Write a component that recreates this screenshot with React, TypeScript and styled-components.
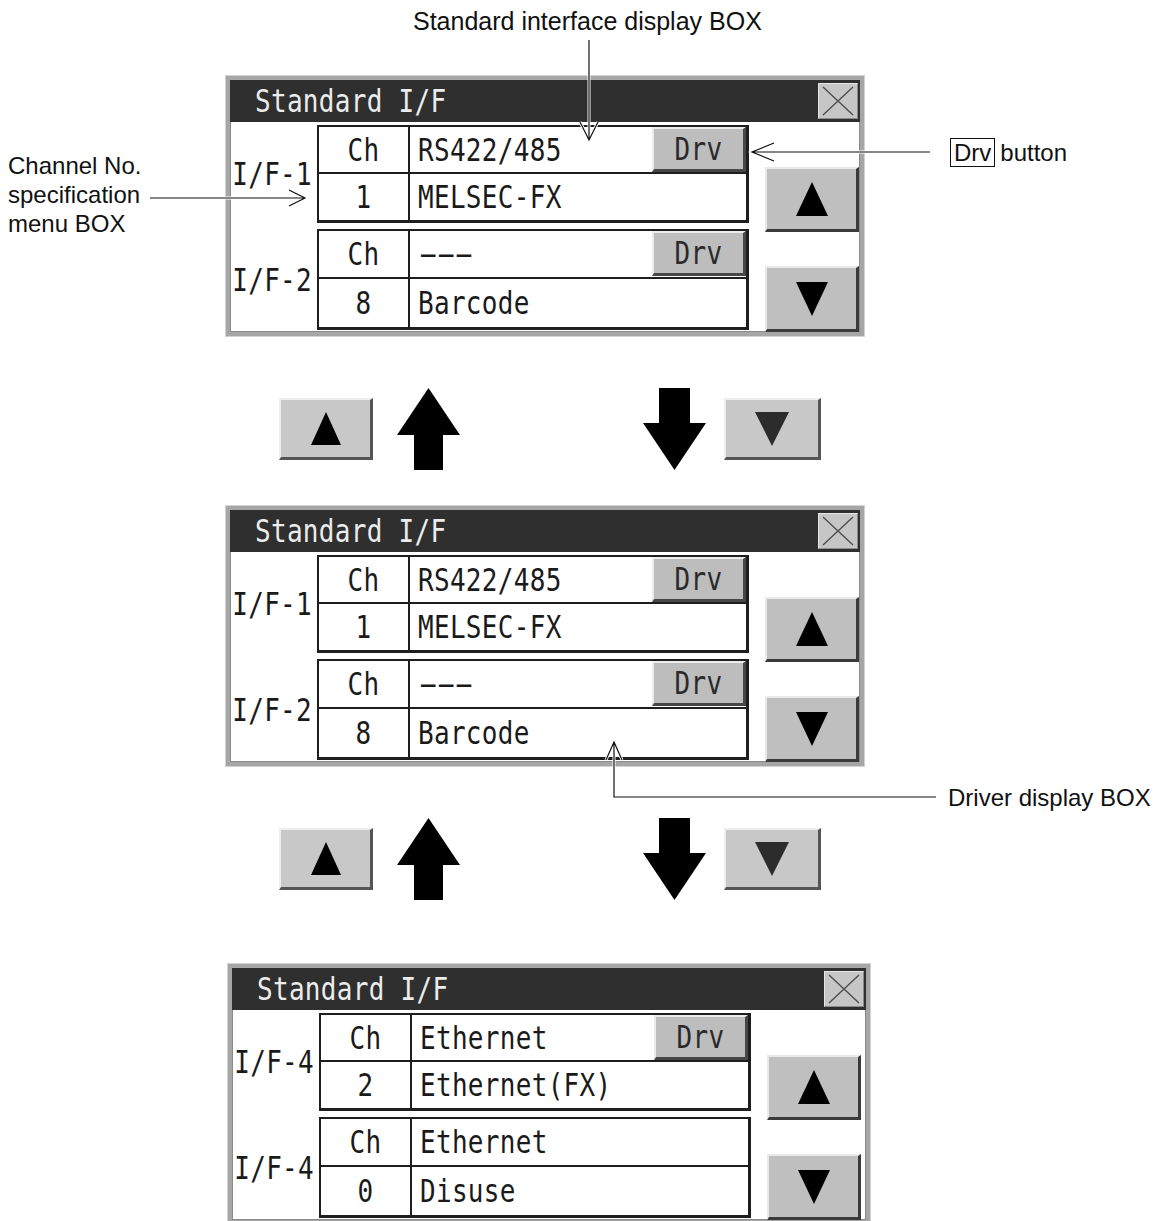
import React from 'react';
import styled, { createGlobalStyle } from 'styled-components';

const GlobalStyle = createGlobalStyle`
  html, body {
    margin: 0;
    padding: 0;
    background: #fff;
  }
  body {
    font-family: 'Liberation Sans', Arial, sans-serif;
    color: #111;
  }
`;

const Page = styled.div`
  position: relative;
  width: 1153px;
  height: 1221px;
  overflow: hidden;
  background: #fff;
  display: flex;
  flex-direction: column;
  padding-top: 76px;
  box-sizing: border-box;
`;

// ---------- HMI screen ----------

const Lcd = styled.span`
  font-family: 'DejaVu Sans Mono', 'Liberation Mono', monospace;
  font-size: 26px;
  line-height: 1;
  display: inline-block;
  transform: scaleY(1.2);
  white-space: pre;
  letter-spacing: 0.3px;
`;

const Dashes = styled(Lcd)`
  letter-spacing: -7.5px;
  margin-left: -7px;
  transform: scaleY(1.2) scaleX(2.2);
  transform-origin: left center;
`;

const Panel = styled.section<{ $left: number; $width: number }>`
  flex: none;
  margin-left: ${p => p.$left}px;
  width: ${p => p.$width}px;
  box-sizing: border-box;
  border: 4px solid #a6a6a6;
  box-shadow: 0 0 0 1px #d2d2d2, inset 0 0 0 1px #8a8a8a;
  background: #fff;
`;

const TitleBar = styled.header`
  height: 42px;
  background: #2f2f2f;
  display: flex;
  align-items: center;
  justify-content: space-between;
  padding: 0 2px 0 25px;
`;

const TitleText = styled(Lcd)`
  color: #ececec;
`;

const CloseBox = styled.div`
  width: 40px;
  height: 36px;
  box-sizing: border-box;
  background: #c6c6c6;
  border: 1px solid #e6e6e6;
  border-right-color: #8a8a8a;
  border-bottom-color: #8a8a8a;
  display: flex;
  align-items: center;
  justify-content: center;
`;

const Body = styled.div`
  display: grid;
  grid-template-columns: 87px 432px 1fr;
  grid-template-rows: 98px 101px;
  row-gap: 6px;
  padding: 3px 1px 2px 0;
`;

const IfLabel = styled.div`
  display: flex;
  align-items: center;
  justify-content: flex-end;
  padding-right: 5px;
  color: #1a1a1a;
`;

const Group = styled.div`
  box-sizing: border-box;
  border: 2px solid #1e1e1e;
  border-right-width: 3px;
  border-bottom-width: 3px;
  display: grid;
  grid-template-columns: 91px 1fr;
  grid-template-rows: 1fr 1fr;
`;

const ChCell = styled.div<{ $top?: boolean }>`
  display: flex;
  align-items: center;
  justify-content: center;
  border-right: 2px solid #1e1e1e;
  border-bottom: ${p => (p.$top ? '2px solid #1e1e1e' : 'none')};
  color: #1a1a1a;
`;

const ValueCell = styled.div<{ $top?: boolean }>`
  display: flex;
  align-items: center;
  justify-content: space-between;
  padding-left: 8px;
  border-bottom: ${p => (p.$top ? '2px solid #1e1e1e' : 'none')};
  color: #1a1a1a;
`;

const DrvButton = styled.div`
  align-self: flex-start;
  width: 94px;
  height: 45px;
  box-sizing: border-box;
  background: #bdbdbd;
  border-style: solid;
  border-width: 2px 3px 3px 2px;
  border-color: #ececec #474747 #474747 #ececec;
  display: flex;
  align-items: center;
  justify-content: center;
  color: #2a2a2a;
`;

const ScrollColumn = styled.div`
  grid-column: 3;
  grid-row: 1 / span 2;
  display: flex;
  flex-direction: column;
  justify-content: flex-end;
  gap: 34px;
  padding-left: 16px;
  margin-bottom: -2px;
`;

const ScrollButton = styled.div<{ $h: number }>`
  width: 94px;
  height: ${p => p.$h}px;
  box-sizing: border-box;
  background: #bfbfbf;
  border-style: solid;
  border-width: 2px 3px 3px 2px;
  border-color: #e9e9e9 #3a3a3a #3a3a3a #e9e9e9;
  display: flex;
  align-items: center;
  justify-content: center;
`;

const Tri = styled.div<{ $dir: 'up' | 'down'; $w: number; $h: number; $color?: string }>`
  width: 0;
  height: 0;
  border-left: ${p => p.$w / 2}px solid transparent;
  border-right: ${p => p.$w / 2}px solid transparent;
  ${p =>
    p.$dir === 'up'
      ? `border-bottom: ${p.$h}px solid ${p.$color || '#000'};`
      : `border-top: ${p.$h}px solid ${p.$color || '#000'};`}
`;

// ---------- transitions between screens ----------

const Transition = styled.div<{ $height: number }>`
  flex: none;
  height: ${p => p.$height}px;
  box-sizing: border-box;
  padding-top: 52px;
`;

const StepRow = styled.div`
  height: 82px;
  display: flex;
  align-items: center;
`;

const StepPair = styled.div<{ $offset: number; $gap: number }>`
  display: flex;
  align-items: center;
  margin-left: ${p => p.$offset}px;
  gap: ${p => p.$gap}px;
`;

const NavButton = styled.div<{ $w: number }>`
  width: ${p => p.$w}px;
  height: 62px;
  box-sizing: border-box;
  background: #c8c8c8;
  border-style: solid;
  border-width: 2px 3px 3px 2px;
  border-color: #eeeeee #555555 #555555 #eeeeee;
  display: flex;
  align-items: center;
  justify-content: center;
`;

// ---------- annotations ----------

const Note = styled.div<{ $x: number; $y: number; $size?: number }>`
  position: absolute;
  left: ${p => p.$x}px;
  top: ${p => p.$y}px;
  font-family: 'Liberation Sans', Arial, sans-serif;
  font-size: ${p => p.$size || 24}px;
  line-height: 29px;
  color: #111;
  white-space: nowrap;
`;

const KeyBox = styled.span`
  display: inline-block;
  border: 1.5px solid #111;
  padding: 0 3px;
  line-height: 27px;
  margin-right: 5px;
`;

const Leaders = styled.svg`
  position: absolute;
  left: 0;
  top: 0;
  pointer-events: none;
`;

type Entry = {
  label: string;
  kind: string;
  ch: string;
  driver: string;
  drv: boolean;
};

const BigArrow: React.FC<{ dir: 'up' | 'down' }> = ({ dir }) => (
  <svg width="63" height="82" viewBox="0 0 63 82">
    {dir === 'up' ? (
      <polygon points="31.5,0 63,47 46,47 46,82 17,82 17,47 0,47" fill="#000" />
    ) : (
      <polygon points="16,0 47,0 47,35 63,35 31.5,82 0,35 16,35" fill="#000" />
    )}
  </svg>
);

const Screen: React.FC<{ left: number; width: number; entries: Entry[] }> = ({ left, width, entries }) => (
  <Panel $left={left} $width={width}>
    <TitleBar>
      <TitleText>Standard I/F</TitleText>
      <CloseBox>
        <svg width="36" height="32" viewBox="0 0 36 32">
          <path d="M3 2 L33 30 M33 2 L3 30" stroke="#4a4a4a" strokeWidth="1.3" fill="none" />
        </svg>
      </CloseBox>
    </TitleBar>
    <Body>
      {entries.map((e, i) => (
        <React.Fragment key={i}>
          <IfLabel>
            <Lcd>{e.label}</Lcd>
          </IfLabel>
          <Group>
            <ChCell $top>
              <Lcd>Ch</Lcd>
            </ChCell>
            <ValueCell $top>
              {e.kind === '---' ? <Dashes>---</Dashes> : <Lcd>{e.kind}</Lcd>}
              {e.drv && (
                <DrvButton>
                  <Lcd>Drv</Lcd>
                </DrvButton>
              )}
            </ValueCell>
            <ChCell>
              <Lcd>{e.ch}</Lcd>
            </ChCell>
            <ValueCell>
              <Lcd>{e.driver}</Lcd>
            </ValueCell>
          </Group>
        </React.Fragment>
      ))}
      <ScrollColumn>
        <ScrollButton $h={65}>
          <Tri $dir="up" $w={32} $h={34} />
        </ScrollButton>
        <ScrollButton $h={66}>
          <Tri $dir="down" $w={32} $h={34} />
        </ScrollButton>
      </ScrollColumn>
    </Body>
  </Panel>
);

const Step: React.FC = () => (
  <StepRow>
    <StepPair $offset={279} $gap={24}>
      <NavButton $w={94}>
        <Tri $dir="up" $w={30} $h={33} />
      </NavButton>
      <BigArrow dir="up" />
    </StepPair>
    <StepPair $offset={183} $gap={18}>
      <BigArrow dir="down" />
      <NavButton $w={97}>
        <Tri $dir="down" $w={34} $h={34} $color="#2c2c2c" />
      </NavButton>
    </StepPair>
  </StepRow>
);

const serialEntries: Entry[] = [
  { label: 'I/F-1', kind: 'RS422/485', ch: '1', driver: 'MELSEC-FX', drv: true },
  { label: 'I/F-2', kind: '---', ch: '8', driver: 'Barcode', drv: true },
];

const ethernetEntries: Entry[] = [
  { label: 'I/F-4', kind: 'Ethernet', ch: '2', driver: 'Ethernet(FX)', drv: true },
  { label: 'I/F-4', kind: 'Ethernet', ch: '0', driver: 'Disuse', drv: false },
];

const Line: React.FC<{ d: string }> = ({ d }) => (
  <>
    <path d={d} stroke="#fff" strokeWidth="3" fill="none" />
    <path d={d} stroke="#111" strokeWidth="1.2" fill="none" />
  </>
);

export default function App() {
  return (
    <>
      <GlobalStyle />
      <Page>
        <Screen left={226} width={638} entries={serialEntries} />
        <Transition $height={170}>
          <Step />
        </Transition>
        <Screen left={226} width={638} entries={serialEntries} />
        <Transition $height={198}>
          <Step />
        </Transition>
        <Screen left={228} width={642} entries={ethernetEntries} />

        <Note $x={413} $y={7} $size={25}>
          Standard interface display BOX
        </Note>
        <Note $x={8} $y={151}>
          Channel No.
          <br />
          specification
          <br />
          menu BOX
        </Note>
        <Note $x={950} $y={138}>
          <KeyBox>Drv</KeyBox>button
        </Note>
        <Note $x={948} $y={783}>
          Driver display BOX
        </Note>

        <Leaders width="1153" height="1221" viewBox="0 0 1153 1221">
          <Line d="M589 40 L589 140 M580 122 L589 140 L598 122" />
          <Line d="M150 198 L305 198 M289 190 L305 198 L289 206" />
          <Line d="M930 152 L752 152 M774 143 L752 152 L774 161" />
          <Line d="M936 797 L614 797 L614 742 M606 760 L614 742 L622 760" />
        </Leaders>
      </Page>
    </>
  );
}
